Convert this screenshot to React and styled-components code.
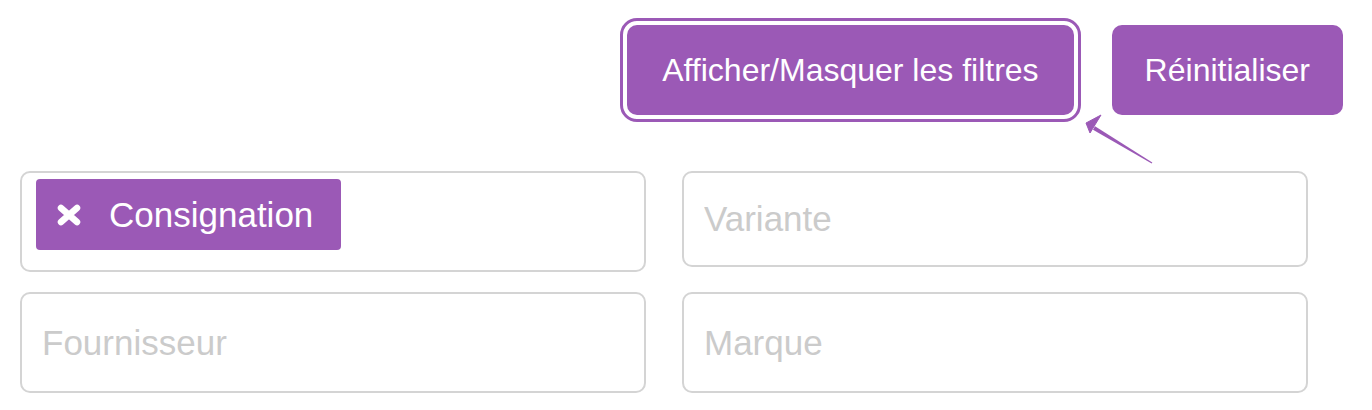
import React from "react";
import styled, { createGlobalStyle } from "styled-components";

const purple = "#9b59b6";

const GlobalStyle = createGlobalStyle`
  html, body {
    margin: 0;
    padding: 0;
    background: #fff;
    font-family: "Liberation Sans", Arial, sans-serif;
  }
`;

const Page = styled.div`
  position: relative;
  width: 1372px;
  height: 410px;
  overflow: hidden;
`;

const Toolbar = styled.div`
  display: flex;
  justify-content: flex-end;
  gap: 38px;
  padding: 25px 29px 0 0;
`;

const Button = styled.button`
  height: 90px;
  padding: 0 ${(p) => p.$pad || 35}px;
  border: none;
  border-radius: 10px;
  background: ${purple};
  color: #fff;
  font-family: "Liberation Sans", Arial, sans-serif;
  font-size: 32px;
  cursor: pointer;
  outline: ${(p) => (p.$focused ? `3px solid ${purple}` : "none")};
  outline-offset: 4px;
`;

const Filters = styled.div`
  display: grid;
  grid-template-columns: 626px 626px;
  column-gap: 36px;
  row-gap: 20px;
  align-items: start;
  margin-top: 56px;
  padding-left: 20px;
`;

const Field = styled.div`
  box-sizing: border-box;
  height: ${(p) => p.$height || 101}px;
  border: 2px solid #d4d4d4;
  border-radius: 10px;
  background: #fff;
  display: flex;
  align-items: ${(p) => (p.$tags ? "flex-start" : "center")};
  padding: ${(p) => (p.$tags ? "6px 14px" : "0 20px")};
`;

const Input = styled.input`
  border: none;
  outline: none;
  width: 100%;
  background: transparent;
  font-family: "Liberation Sans", Arial, sans-serif;
  font-size: 35px;
  color: #333;
  padding: 0;

  &::placeholder {
    color: #cbcbcb;
  }
`;

const Tag = styled.span`
  display: inline-flex;
  align-items: center;
  gap: 27px;
  height: 71px;
  padding: 0 28px 0 20px;
  border-radius: 4px;
  background: ${purple};
  color: #fff;
  font-size: 35px;
`;

const Arrow = styled.svg`
  position: absolute;
  left: 1080px;
  top: 110px;
`;

const RemoveIcon = () => (
  <svg width="26" height="22" viewBox="0 0 26 22">
    <path
      d="M5 4 L21 18 M21 4 L5 18"
      stroke="#fff"
      strokeWidth="6.5"
      strokeLinecap="round"
    />
  </svg>
);

const FilterField = ({ placeholder, height }) => (
  <Field $height={height}>
    <Input placeholder={placeholder} />
  </Field>
);

export default function App() {
  return (
    <Page>
      <GlobalStyle />
      <Toolbar>
        <Button $focused>Afficher/Masquer les filtres</Button>
        <Button $pad={33}>Réinitialiser</Button>
      </Toolbar>

      <Filters>
        <Field $tags>
          <Tag>
            <RemoveIcon />
            Consignation
          </Tag>
        </Field>
        <FilterField placeholder="Variante" height={96} />
        <FilterField placeholder="Fournisseur" />
        <FilterField placeholder="Marque" />
      </Filters>

      <Arrow width="80" height="60" viewBox="0 0 80 60">
        <path d="M15 16.3 L72.3 52.5 L71.7 53.5 L13 19.7 Z" fill={purple} />
        <path d="M6 13 L21 5 L10 23 Z" fill={purple} stroke={purple} strokeWidth="1" strokeLinejoin="round" />
      </Arrow>
    </Page>
  );
}
